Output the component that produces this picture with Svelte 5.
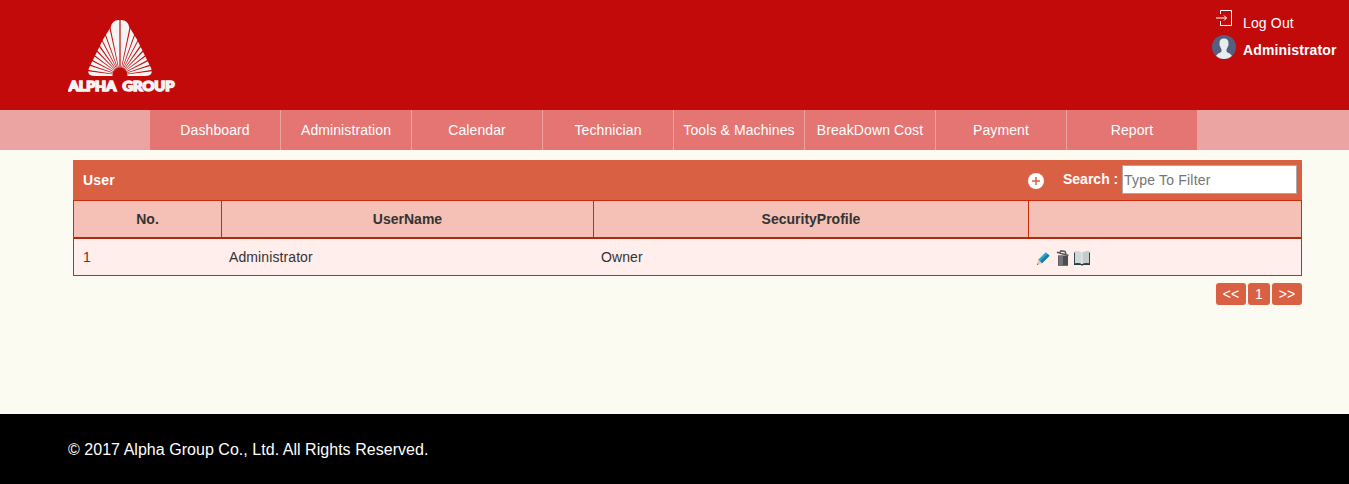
<script>
  const menu = ['Dashboard', 'Administration', 'Calendar', 'Technician', 'Tools & Machines', 'BreakDown Cost', 'Payment', 'Report'];
  const users = [{ no: 1, name: 'Administrator', profile: 'Owner' }];
  // slits of the fan: thin wedges that open outwards from the hub
  const point = (deg, r) => {
    const a = (deg * Math.PI) / 180;
    return `${52 + r * Math.sin(a)} ${57 - r * Math.cos(a)}`;
  };
  const slits = [12, 20, 27.5, 35.5, 44, 53, 62.5, 72, 82].flatMap((a) => [-a, a]).map((a) => {
    const w = Math.abs(a) < 30 ? 0.65 : 1;
    return `M${point(a - 2.5, 6)}L${point(a - w, 60)}L${point(a + w, 60)}L${point(a + 2.5, 6)}Z`;
  });
</script>

<header>
  <svg class="logo" width="110" height="76" viewBox="0 0 110 76">
    <path d="M43 8.500Q44.500 2 50.500 2H53.500Q59.500 2 61 8.500L69 21.500L83 50Q85 55 82 57Q80 58 77 58H27Q24 58 22 57Q19 55 21 50L35 21.500Z" fill="#f4f4f4" />
    <path d="M52 1V58" stroke="#c30a0a" stroke-width="1.200" />
    {#each slits as d}
      <path {d} fill="#c30a0a" />
    {/each}
    <circle cx="52" cy="57" r="7.500" fill="#c30a0a" />
    <text x="0.700" y="72.500" textLength="47.500" lengthAdjust="spacingAndGlyphs">ALPHA</text>
    <text x="54.500" y="72.500" textLength="52" lengthAdjust="spacingAndGlyphs">GROUP</text>
  </svg>
  <div class="account">
    <a href="#logout" class="logout">
      <svg width="18" height="18" viewBox="0 0 18 18" fill="none" stroke="#fff" stroke-width="1">
        <path d="M4.500 5V1.500H15.500V16.500H4.500V12M0 9H10.500M8 6.500L10.500 9L8 11.500" />
      </svg>
      <span>Log Out</span>
    </a>
    <a href="#profile" class="profile">
      <svg width="24" height="24" viewBox="0 0 24 24">
        <circle cx="12" cy="12" r="12" fill="#556080" />
        <path d="M12 3.500C8.500 3.500 7.300 5.500 7.600 8.700C7.200 9.500 7.500 10.800 8.200 11.500C8.500 13 9.500 13.700 9.500 14.500V16.500C8.500 18 5 18.400 4.200 21C8 24.900 16 24.900 19.800 21C19 18.400 15.500 18 14.500 16.500V14.500C14.500 13.700 15.500 13 15.800 11.500C16.500 10.800 16.800 9.500 16.400 8.700C16.700 5.500 15.500 3.500 12 3.500Z" fill="#e7eced" />
      </svg>
      <b>Administrator</b>
    </a>
  </div>
</header>

<nav>
  {#each menu as item}
    <a href="#menu">{item}</a>
  {/each}
</nav>

<main>
  <div class="titlebar">
    <b class="title">User</b>
    <svg class="add" width="16" height="16" viewBox="0 0 16 16">
      <circle cx="8" cy="8" r="8" fill="#fff" />
      <path d="M8 4V12M4 8H12" stroke="#da6044" stroke-width="1.5" />
    </svg>
    <label for="filter">Search :</label>
    <input id="filter" placeholder="Type To Filter" />
  </div>
  <div class="table">
    <div class="row head">
      <b>No.</b><b>UserName</b><b>SecurityProfile</b><b></b>
    </div>
    {#each users as user}
      <div class="row body">
        <span class="no">{user.no}</span>
        <span>{user.name}</span>
        <span>{user.profile}</span>
        <span class="actions">
          <svg width="16" height="16" viewBox="0 0 16 16">
            <path d="M2.200 9.700L9.800 2.300L13.500 5.800L6 13.300Z" fill="#2ba0c9" />
            <path d="M4.200 11.600L11.700 4.100L13.500 5.800L6 13.300Z" fill="#177da5" />
            <path d="M2.200 9.700L6 13.300L1 14.800Z" fill="#efc3ae" />
            <path d="M1.400 13.300L2.600 14.400L.8 15Z" fill="#666" />
          </svg>
          <svg width="16" height="16" viewBox="0 0 16 16">
            <path d="M3 5.500H13V15.800H3Z" fill="#4c4c50" />
            <path d="M3.500 5.500H8V15.800H3.500Z" fill="#747478" />
            <path d="M2 2.300L13.500 5.500M5 2.500L6 .8L10 1.500L11 4" fill="none" stroke="#56565a" stroke-width="1.500" />
          </svg>
          <svg width="16" height="16" viewBox="0 0 17 16" preserveAspectRatio="none">
            <path d="M0 2.500H1.500V13H7L8.500 14L10 13H15.500V2.500H17V15H10L8.500 15.700L7 15H0Z" fill="#293b45" />
            <path d="M1 1Q5.500 .6 8.500 2.500V14Q5.500 12.500 1 13.300Z" fill="#d1d7d6" />
            <path d="M16 1Q11.500 .6 8.500 2.500V14Q11.500 12.500 16 13.300Z" fill="#c3cccb" />
            <path d="M8.500 2.500V14" stroke="#f2f4f3" stroke-width=".8" />
          </svg>
        </span>
      </div>
    {/each}
  </div>
  <div class="pager">
    <a href="#prev">&lt;&lt;</a><a href="#page">1</a><a href="#next">&gt;&gt;</a>
  </div>
</main>

<footer>© 2017 Alpha Group Co., Ltd. All Rights Reserved.</footer>

<style>
  :global(body) {
    background: #fbfbf2;
    font: 14px/20px 'Liberation Sans', Arial, sans-serif;
    color: #333;
  }
  :global(#app) {
    display: flex;
    flex-direction: column;
    height: 484px;
  }
  a { color: #fff; text-decoration: none; }
  header {
    display: flex;
    justify-content: space-between;
    height: 110px;
    flex: none;
    background: #c30a0a;
  }
  .logo { margin: 18px 0 0 68px; }
  .logo text {
    font: 900 13px Lato, sans-serif;
    fill: #f4f4f4;
    stroke: #f4f4f4;
    stroke-width: 1.5;
  }
  .account { width: 137px; padding-top: 9px; }
  .logout, .profile { display: flex; }
  .logout { height: 26px; padding-left: 4px; box-sizing: border-box; gap: 9px; }
  .logout span { padding-top: 4px; letter-spacing: .15px; }
  .profile { gap: 7px; }
  .profile b { padding-top: 5px; letter-spacing: .13px; }
  nav {
    display: flex;
    height: 40px;
    flex: none;
    padding-left: 150px;
    background: #eba4a1;
  }
  nav a {
    width: 130px;
    margin-right: 1px;
    line-height: 40px;
    text-align: center;
    letter-spacing: .1px;
    background: #e47573;
    white-space: nowrap;
  }
  nav a:last-child { margin-right: 0; }
  main { flex: 1; padding: 10px 47px 0 73px; }
  .titlebar {
    display: flex;
    height: 40px;
    padding: 0 5px 0 10px;
    background: #da6044;
    color: #fff;
  }
  .title { flex: 1; line-height: 40px; letter-spacing: .15px; }
  .add { margin: 13px 19px 0 0; }
  label { width: 59px; font-weight: bold; line-height: 38px; }
  input {
    box-sizing: border-box;
    width: 175px;
    height: 29px;
    margin: 5px 0 0;
    padding: 1px;
    border: 1px solid #a9a9a9;
    border-radius: 0;
    font: 14px 'Liberation Sans', Arial, sans-serif;
    letter-spacing: .2px;
    background: #fff;
  }
  input::placeholder { color: #757575; }
  .table { border: 1px solid #c82d10; }
  .row { display: grid; grid-template-columns: 148px 372px 435px 1fr; line-height: 36px; }
  .head { background: #f5c1b6; border-bottom: 2px solid #b12a0c; text-align: center; }
  .head b { border-right: 1px solid #c82d10; height: 36px; }
  .head b:last-child { border-right: 0; }
  .body { height: 36px; background: #ffeeec; }
  .body span { padding-left: 7px; letter-spacing: .1px; }
  .body .no { padding-left: 9px; color: #7d2b20; }
  .body .actions { display: flex; align-items: center; gap: 3px; padding-top: 2px; height: 34px; }
  .pager { display: flex; justify-content: flex-end; gap: 2px; margin-top: 7px; }
  .pager a {
    box-sizing: border-box;
    width: 30px;
    text-align: center;
    line-height: 22px;
    border-radius: 3px;
    background: #da6044;
  }
  .pager a:nth-child(2) { width: 22px; }
  footer {
    height: 70px;
    flex: none;
    padding: 1px 0 0 68px;
    box-sizing: border-box;
    background: #000;
    color: #fff;
    font-size: 16px;
    line-height: 70px;
    letter-spacing: .035px;
  }
</style>
